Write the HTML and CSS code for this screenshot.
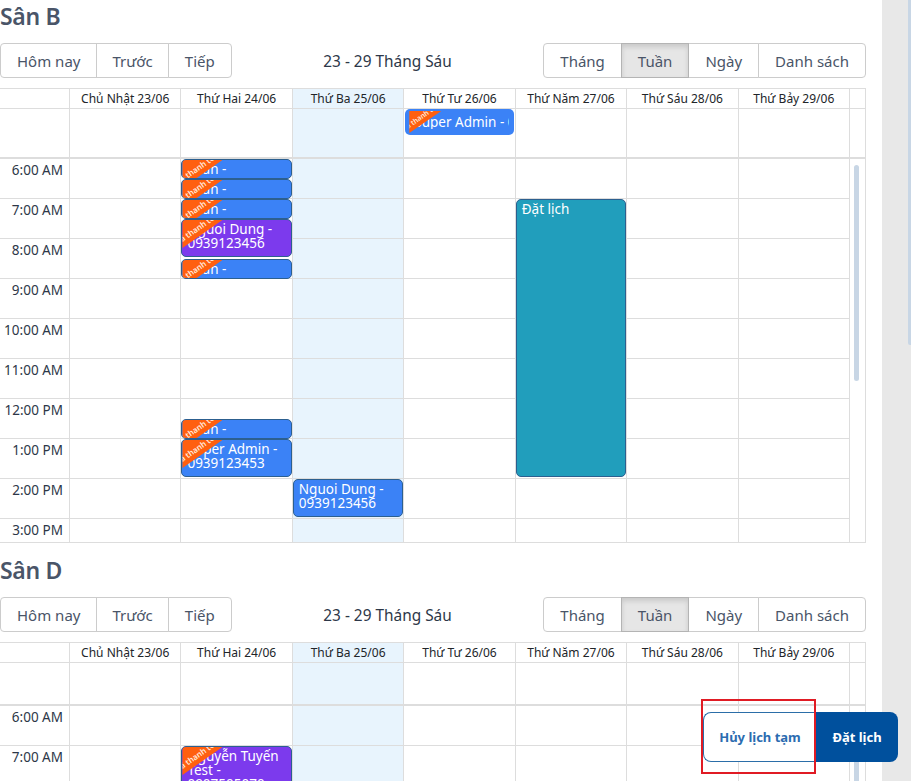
FILE: index.html
```html
<!DOCTYPE html>
<html lang="vi">
<head>
<meta charset="utf-8">
<title>Lịch sân</title>
<link rel="stylesheet" href="styles.css">
</head>
<body>
<div class="shell">
<main class="page">

<section class="court">
  <h2 class="court-title">Sân B</h2>
  <div class="toolbar">
    <div class="btn-group"><button class="btn">Hôm nay</button><button class="btn btn-prev">Trước</button><button class="btn">Tiếp</button></div>
    <div class="range">23 - 29 Tháng Sáu</div>
    <div class="btn-group"><button class="btn">Tháng</button><button class="btn active">Tuần</button><button class="btn">Ngày</button><button class="btn">Danh sách</button></div>
  </div>
  <div class="cal">
    <div class="cal-row head">
      <div class="cell axis"></div>
      <div class="cell">Chủ Nhật 23/06</div><div class="cell">Thứ Hai 24/06</div><div class="cell today">Thứ Ba 25/06</div><div class="cell">Thứ Tư 26/06</div><div class="cell">Thứ Năm 27/06</div><div class="cell">Thứ Sáu 28/06</div><div class="cell">Thứ Bảy 29/06</div>
      <div class="cell gutter"></div>
    </div>
    <div class="cal-row allday tall">
      <div class="cell axis"></div>
      <div class="cell"></div><div class="cell"></div><div class="cell today"></div>
      <div class="cell"><div class="event allday-event"><span class="paid small"><span>đã thanh toán</span></span><span class="ev-clip">Super Admin - 0939123453</span></div></div>
      <div class="cell"></div><div class="cell"></div><div class="cell"></div>
      <div class="cell gutter"></div>
    </div>
    <div class="scroller">
      <div class="cal-row timegrid">
        <div class="times">
          <div class="time">6:00 AM</div><div class="time">7:00 AM</div><div class="time">8:00 AM</div><div class="time">9:00 AM</div><div class="time">10:00 AM</div><div class="time">11:00 AM</div><div class="time">12:00 PM</div><div class="time">1:00 PM</div><div class="time">2:00 PM</div><div class="time">3:00 PM</div>
        </div>
        <div class="day"></div>
        <div class="day">
          <div class="event" style="top:0;height:20px"><span class="paid"><span>đã thanh toán</span></span>Tuan -</div>
          <div class="event" style="top:20px;height:20px"><span class="paid"><span>đã thanh toán</span></span>Tuan -</div>
          <div class="event" style="top:40px;height:20px"><span class="paid"><span>đã thanh toán</span></span>Tuan -</div>
          <div class="event purple" style="top:60px;height:38px"><span class="paid"><span>đã thanh toán</span></span>Nguoi Dung - 0939123456</div>
          <div class="event" style="top:100px;height:20px"><span class="paid"><span>đã thanh toán</span></span>Tuan -</div>
          <div class="event" style="top:260px;height:20px"><span class="paid"><span>đã thanh toán</span></span>Tuan -</div>
          <div class="event" style="top:280px;height:38px"><span class="paid"><span>đã thanh toán</span></span>Super Admin - 0939123453</div>
        </div>
        <div class="day today"><div class="event" style="top:320px;height:38px">Nguoi Dung - 0939123456</div></div>
        <div class="day"></div>
        <div class="day"><div class="event teal" style="top:40px;height:278px">Đặt lịch</div></div>
        <div class="day"></div>
        <div class="day"></div>
        <div class="thumb"></div>
      </div>
    </div>
  </div>
</section>

<section class="court">
  <h2 class="court-title">Sân D</h2>
  <div class="toolbar">
    <div class="btn-group"><button class="btn">Hôm nay</button><button class="btn btn-prev">Trước</button><button class="btn">Tiếp</button></div>
    <div class="range">23 - 29 Tháng Sáu</div>
    <div class="btn-group"><button class="btn">Tháng</button><button class="btn active">Tuần</button><button class="btn">Ngày</button><button class="btn">Danh sách</button></div>
  </div>
  <div class="cal">
    <div class="cal-row head">
      <div class="cell axis"></div>
      <div class="cell">Chủ Nhật 23/06</div><div class="cell">Thứ Hai 24/06</div><div class="cell today">Thứ Ba 25/06</div><div class="cell">Thứ Tư 26/06</div><div class="cell">Thứ Năm 27/06</div><div class="cell">Thứ Sáu 28/06</div><div class="cell">Thứ Bảy 29/06</div>
      <div class="cell gutter"></div>
    </div>
    <div class="cal-row allday">
      <div class="cell axis"></div>
      <div class="cell"></div><div class="cell"></div><div class="cell today"></div><div class="cell"></div><div class="cell"></div><div class="cell"></div><div class="cell"></div>
      <div class="cell gutter"></div>
    </div>
    <div class="scroller">
      <div class="cal-row timegrid">
        <div class="times">
          <div class="time">6:00 AM</div><div class="time">7:00 AM</div><div class="time">8:00 AM</div><div class="time">9:00 AM</div><div class="time">10:00 AM</div><div class="time">11:00 AM</div><div class="time">12:00 PM</div><div class="time">1:00 PM</div><div class="time">2:00 PM</div><div class="time">3:00 PM</div>
        </div>
        <div class="day"></div>
        <div class="day"><div class="event purple" style="top:40px;height:78px"><span class="paid"><span>đã thanh toán</span></span>Nguyễn Tuyến Test - 0907505070</div></div>
        <div class="day today"></div>
        <div class="day"></div>
        <div class="day"></div>
        <div class="day"></div>
        <div class="day"></div>
        <div class="thumb"></div>
      </div>
    </div>
  </div>
</section>

</main>
<aside class="rail"><div class="rail-thumb"></div></aside>
</div>

<div class="actions">
  <button class="action outline">Hủy lịch tạm</button>
  <button class="action solid">Đặt lịch</button>
</div>
<div class="annotation"></div>
</body>
</html>
```
FILE: styles.css
```css
* { box-sizing: border-box; }
html, body { margin: 0; height: 100%; overflow: hidden; }
body { background: #fff; color: #212529; font-family: "Noto Sans", "Open Sans", sans-serif; }
.shell { display: flex; height: 781px; overflow: hidden; }
.page { width: 882px; flex: none; padding-right: 16px; background: #fff; }
.rail { flex: 1; background: #e8e8e8; display: flex; justify-content: flex-end; align-items: flex-start; }
.rail-thumb { width: 3px; height: 345px; border-radius: 0 0 0 2px; background: #c8d6e5; }

.court-title { margin: 0; padding-top: 11px; height: 54px; font-size: 23px; line-height: 32px; font-weight: 600; letter-spacing: -.3px; color: #4a5568; }
.court:first-child .court-title { padding-top: 0; height: 43px; }

.toolbar { display: flex; justify-content: space-between; align-items: center; height: 35px; margin-bottom: 10px; }
.btn-group { display: flex; }
.btn { position: relative; height: 35px; padding: 1px 16px 0; font: 400 15px/1 "Noto Sans", sans-serif; color: #4a5568; background: #fff; border: 1px solid #ccc; margin-left: -1px; }
.btn-prev { padding: 1px 15px 0; }
.btn:first-child { margin-left: 0; border-radius: 4px 0 0 4px; }
.btn:last-child { border-radius: 0 4px 4px 0; }
.btn.active { z-index: 1; background: #e6e6e6; border-color: #b4b4b4; box-shadow: inset 0 3px 5px rgba(0, 0, 0, .125); }
.range { padding-top: 1px; font-size: 15.4px; color: #2d3748; }

.cal { border: 1px solid #ddd; border-left: 0; height: 455px; overflow: hidden; }
.court:last-child .cal { height: 600px; }
.cal-row { display: grid; grid-template-columns: 70px repeat(7, 1fr) 15px; }
.cell { border-right: 1px solid #ddd; min-width: 0; }
.cell.gutter { border-right: 0; }
.cell.today, .day.today { background-color: #e8f4fd; }
.head { height: 20px; border-bottom: 1px solid #ddd; }
.head .cell { font-size: 12px; line-height: 19px; text-align: center; color: #212529; }
.allday { height: 43px; border-bottom: 2px solid #ddd; }
.allday.tall { height: 50px; }
.allday .cell { position: relative; }

.scroller { height: 600px; overflow: hidden; }
.timegrid { position: relative; }
.times { border-right: 1px solid #ddd; }
.time { height: 40px; padding: 2px 6px 0 0; border-bottom: 1px solid #ddd; text-align: right; font-size: 13.5px; line-height: 19px; color: #2d3748; }
.day { position: relative; height: 400px; border-right: 1px solid #ddd; background-image: repeating-linear-gradient(to bottom, transparent 0 39px, #ddd 39px 40px); }
.thumb { position: absolute; top: 6px; right: 6px; width: 5px; height: 216px; border-radius: 3px; background: #c8d6e5; }

.event { position: absolute; left: 0; right: 0; overflow: hidden; padding: 2px 5px 0; background: #3b82f6; border: 1px solid #2c5f8f; border-radius: 5px; color: #fff; font-size: 13.5px; line-height: 14px; }
.event.purple { background: #7c3aed; }
.event.teal { background: #219ebc; }
.allday-event { top: 0; left: 1px; right: 1px; height: 26px; padding: 6px 5px 0 9px; border: 0; white-space: nowrap; }
.ev-clip { display: block; overflow: hidden; }

.paid { position: absolute; top: 0; left: 0; width: 40px; height: 28px; background: #ff5f0f; clip-path: polygon(0 0, 100% 0, 0 100%); overflow: hidden; }
.paid span { position: absolute; left: -13px; top: 2px; width: 60px; text-align: center; font-size: 8px; line-height: 10px; font-weight: 600; color: #ffe9dc; white-space: nowrap; transform: rotate(-35deg); }
.paid.small { top: 2px; left: 4px; width: 32px; height: 22px; }
.paid.small span { left: -16px; top: 0; font-size: 7px; }

.actions { position: fixed; left: 703px; top: 712px; display: flex; height: 50px; }
.action { height: 50px; font: 700 13px/1 "Noto Sans", sans-serif; }
.outline { width: 113px; background: #fff; color: #2b6cb0; border: 1px solid #2b6ea8; border-right: 0; border-radius: 8px 0 0 8px; }
.solid { width: 82px; background: #00509d; color: #fff; border: 0; border-radius: 0 8px 8px 0; }
.annotation { position: fixed; left: 701px; top: 699px; width: 115px; height: 75px; border: 2px solid #e01b24; pointer-events: none; }
```
